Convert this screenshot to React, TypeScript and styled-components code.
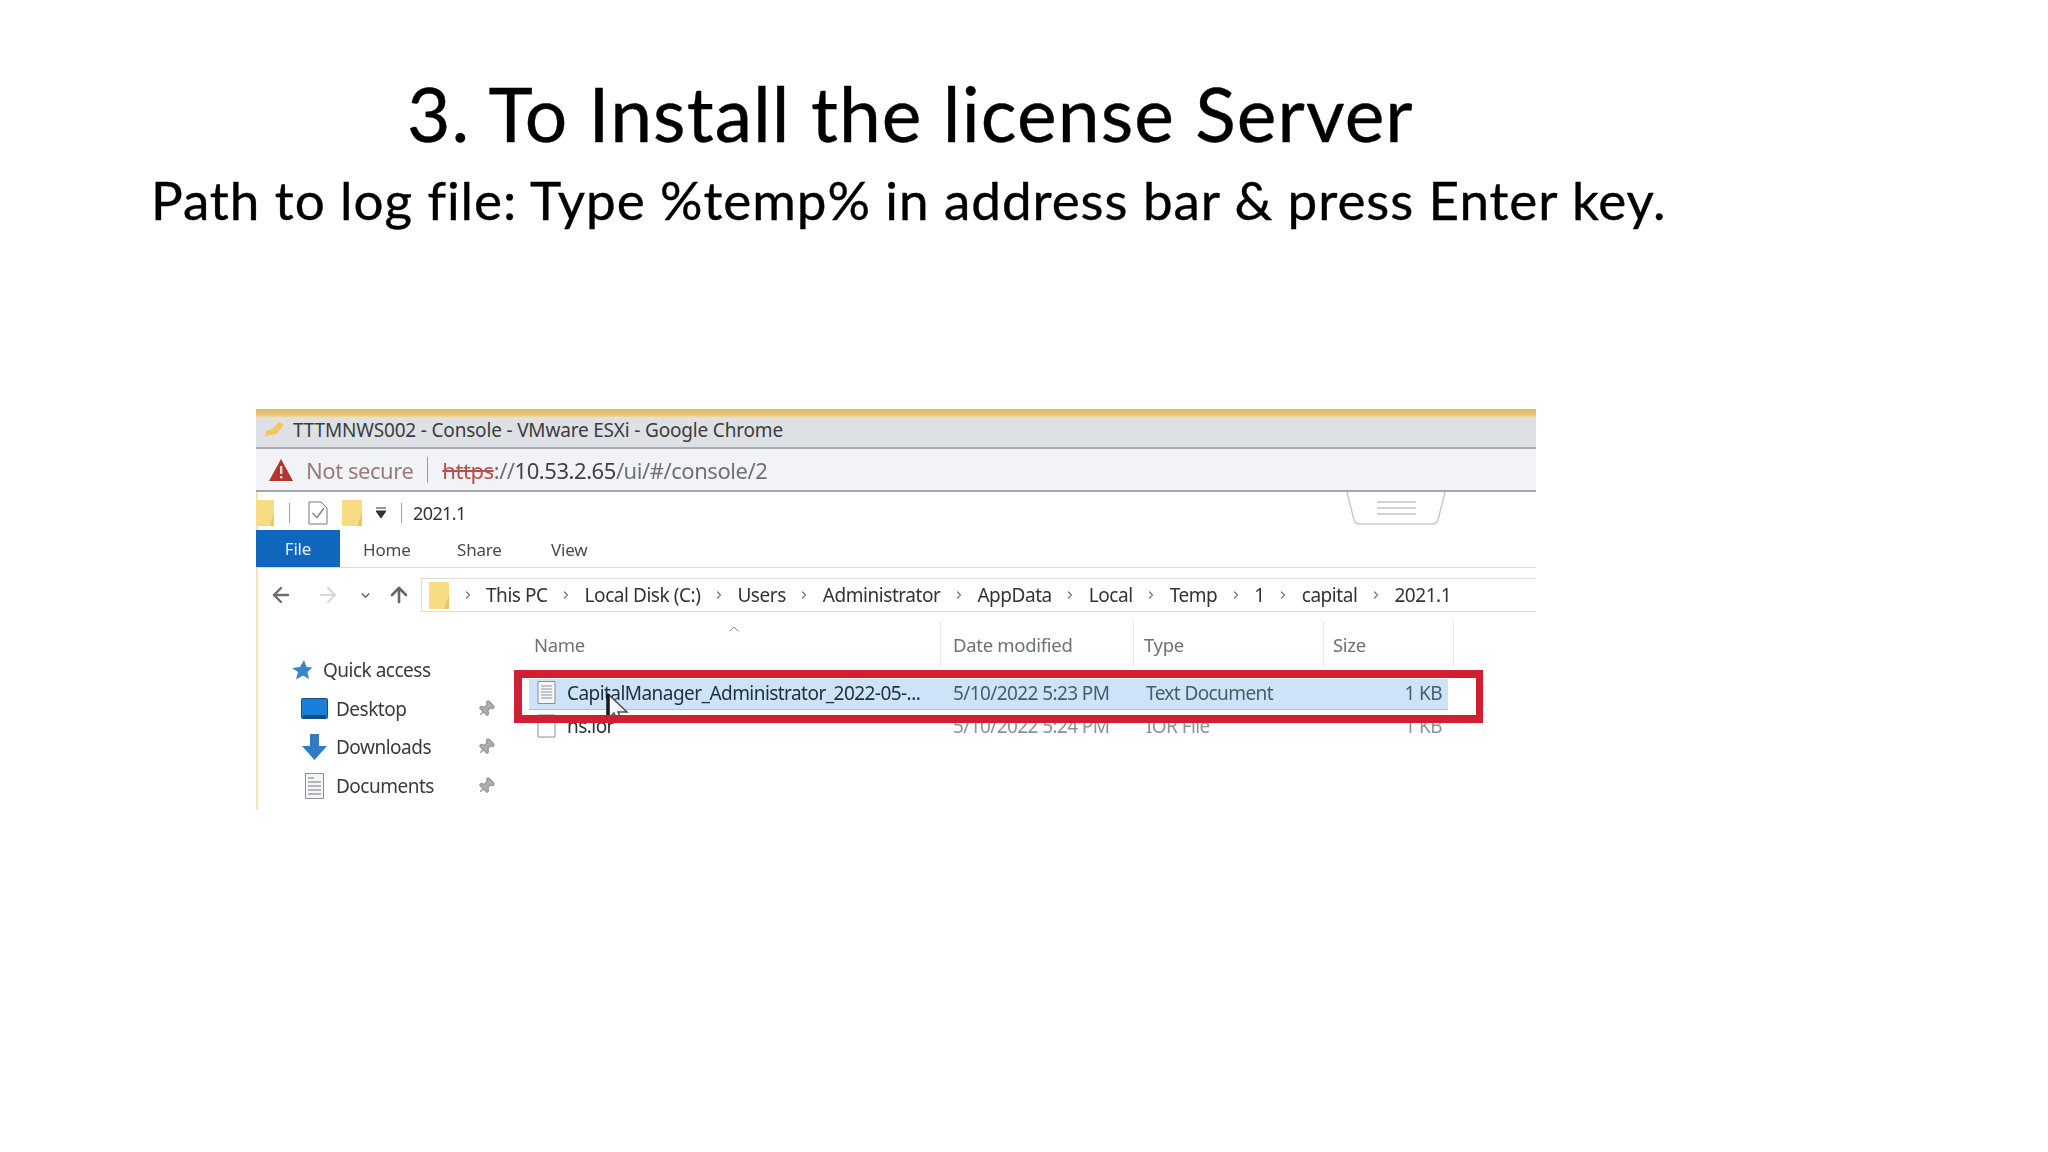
import React from 'react';
import styled, { createGlobalStyle } from 'styled-components';
import { ArrowLeft, ArrowRight, ArrowUp, ChevronDown, ChevronRight, ChevronUp, Pin } from 'lucide-react';

const GlobalStyle = createGlobalStyle`
  html, body {
    margin: 0;
    background: #ffffff;
  }
`;

const crumbs = ['This PC', 'Local Disk (C:)', 'Users', 'Administrator', 'AppData', 'Local', 'Temp', '1', 'capital', '2021.1'];

const FolderIcon = ({ w = 20, h = 26 }: { w?: number; h?: number }) => (
  <svg width={w} height={h} viewBox="0 0 20 26" preserveAspectRatio="none">
    <rect x="0" y="0" width="20" height="26" fill="#f8dc84" />
    <path d="M20 12 L15 26 H20 Z" fill="#e9c768" />
  </svg>
);

const DocIcon = () => (
  <svg width="19" height="23" viewBox="0 0 19 23">
    <path d="M1 .5 H18 V22.5 H1 Z" fill="#f4f6f8" stroke="#8a8f96" />
    <path d="M4 5 H15 M4 8 H15 M4 11 H15 M4 14 H15 M4 17 H15" stroke="#8f969e" />
  </svg>
);

const BlankFileIcon = () => (
  <svg width="19" height="24" viewBox="0 0 19 24">
    <path d="M1 1 H18 V23 H1 Z" fill="#fff" stroke="#8a8f96" />
  </svg>
);

const App: React.FC = () => (
  <>
    <GlobalStyle />
    <Slide>
      <Title>3. To Install the license Server</Title>
      <Subtitle>Path to log file: Type %temp% in address bar &amp; press Enter key.</Subtitle>
      <Shot>
        <TitleBar>
          <svg width="20" height="16" viewBox="0 0 20 16">
            <path d="M1 15 L2 9 L8 7 L15 0 L20 3 L12 12 L6 13 Z" fill="#f4c558" />
          </svg>
          <span>TTTMNWS002 - Console - VMware ESXi - Google Chrome</span>
        </TitleBar>
        <AddressBar>
          <svg width="26" height="24" viewBox="0 0 26 24">
            <path d="M13 1 L25 23 H1 Z" fill="#b3352f" />
            <rect x="12" y="8" width="2.4" height="8" fill="#f3d8d3" />
            <rect x="12" y="18" width="2.4" height="2.4" fill="#f3d8d3" />
          </svg>
          <NotSecure>Not secure</NotSecure>
          <UrlDivider />
          <Url>
            <s>https</s>
            <span>:</span>//<b>10.53.2.65</b>/ui/#/console/2
          </Url>
        </AddressBar>
        <QuickBar>
          <FolderIcon w={18} h={26} />
          <QuickDivider />
          <svg width="20" height="24" viewBox="0 0 20 24">
            <path d="M1 1 H13 L19 7 V23 H1 Z" fill="#fff" stroke="#777" />
            <path d="M4.5 12 L9 16.5 L16 7" fill="none" stroke="#888" strokeWidth="1.6" />
          </svg>
          <FolderIcon w={20} h={26} />
          <svg width="10" height="12" viewBox="0 0 10 12">
            <path d="M0 1 H10 M0 4 H10 L5 11 Z" fill="#333" stroke="#333" />
          </svg>
          <QuickDivider />
          <QuickPath>2021.1</QuickPath>
          <RibbonHandle width="100" height="34" viewBox="0 0 100 34">
            <path d="M1 0 L8 28 Q9 32 14 32 H86 Q91 32 92 28 L99 0" fill="#fff" stroke="#c9cbcd" strokeWidth="1.5" />
            <path d="M31 10 H70 M31 16 H70 M31 22 H70" stroke="#cfd1d3" strokeWidth="2" />
          </RibbonHandle>
        </QuickBar>
        <Tabs>
          <FileTab>File</FileTab>
          <Tab>Home</Tab>
          <Tab>Share</Tab>
          <Tab>View</Tab>
        </Tabs>
        <NavRow>
          <NavSlot $ml={13}>
            <ArrowLeft size={24} color="#6d6d6d" strokeWidth={2.4} />
          </NavSlot>
          <NavSlot $ml={23}>
            <ArrowRight size={24} color="#d8d8d8" strokeWidth={2.2} />
          </NavSlot>
          <NavSlot $ml={19}>
            <ChevronDown size={13} color="#777" strokeWidth={3} />
          </NavSlot>
          <NavSlot $ml={15}>
            <ArrowUp size={24} color="#666" strokeWidth={2.6} />
          </NavSlot>
          <PathBox>
            <FolderIcon w={20} h={27} />
            {crumbs.map((c) => (
              <Crumb key={c}>
                <ChevronRight size={12} color="#777" strokeWidth={2.5} />
                <span>{c}</span>
              </Crumb>
            ))}
          </PathBox>
        </NavRow>
        <Body>
          <Sidebar>
            <NavItem $indent={36}>
              <svg width="24" height="22" viewBox="0 0 22 22">
                <path d="M13 1 L15.5 8 L21.5 8.5 L16.5 13 L18 20 L12 16.5 L5 20.5 L7 13 L1 9 L9 8 Z" fill="#3a85c8" />
              </svg>
              <NavLabel $gap={9}>Quick access</NavLabel>
            </NavItem>
            <NavItem $indent={47}>
              <svg width="27" height="22" viewBox="0 0 27 22">
                <rect x="0.5" y="0.5" width="26" height="20" rx="1" fill="#1a7fd8" stroke="#17507f" />
                <rect x="2" y="17" width="23" height="3" fill="#134d80" />
              </svg>
              <NavLabel $gap={8}>Desktop</NavLabel>
              <PinMark />
            </NavItem>
            <NavItem $indent={47}>
              <svg width="27" height="26" viewBox="0 0 27 26">
                <path d="M9 0 H18 V12 H26 L13.5 26 L1 12 H9 Z" fill="#2f7cc4" />
              </svg>
              <NavLabel $gap={8}>Downloads</NavLabel>
              <PinMark />
            </NavItem>
            <NavItem $indent={51}>
              <svg width="19" height="26" viewBox="0 0 19 26">
                <path d="M0.5 0.5 H18.5 V25.5 H0.5 Z" fill="#f3f5f7" stroke="#8a8f96" />
                <path d="M3 5 H9 M3 9 H16 M3 13 H16 M3 17 H16 M3 21 H16" stroke="#6f7780" />
              </svg>
              <NavLabel $gap={12}>Documents</NavLabel>
              <PinMark />
            </NavItem>
          </Sidebar>
          <FileList>
            <SortMark>
              <ChevronUp size={16} color="#8a8a8a" strokeWidth={1.5} />
            </SortMark>
            <HeaderRow>
              <HeaderCell $pad={21}>Name</HeaderCell>
              <HeaderCell $pad={12}>Date modified</HeaderCell>
              <HeaderCell $pad={10}>Type</HeaderCell>
              <HeaderCell $pad={9}>Size</HeaderCell>
            </HeaderRow>
            <FileRow $selected>
              <NameCell>
                <DocIcon />
                <span>CapitalManager_Administrator_2022-05-...</span>
              </NameCell>
              <MetaCell>5/10/2022 5:23 PM</MetaCell>
              <MetaCell>Text Document</MetaCell>
              <SizeCell>1 KB</SizeCell>
            </FileRow>
            <FileRow>
              <NameCell>
                <BlankFileIcon />
                <span>ns.ior</span>
              </NameCell>
              <MetaCell>5/10/2022 5:24 PM</MetaCell>
              <MetaCell>IOR File</MetaCell>
              <SizeCell>1 KB</SizeCell>
            </FileRow>
            <Cursor width="24" height="30" viewBox="0 0 24 30">
              <path d="M2 1 V26 L8 20 L12 29 L16 27 L12 19 L21 19 Z" fill="#f4f6f8" stroke="#4a4f55" strokeWidth="1.5" />
              <path d="M2 1 V26" stroke="#15181c" strokeWidth="3.5" />
            </Cursor>
            <RedBox />
          </FileList>
        </Body>
      </Shot>
    </Slide>
  </>
);

export default App;

const Slide = styled.div`
  width: 2048px;
  height: 1152px;
  box-sizing: border-box;
  background: #ffffff;
  overflow: hidden;
  padding-top: 68px;
  font-family: 'Lato', 'Open Sans', sans-serif;
  font-variant-ligatures: none;
  color: #000000;
  -webkit-text-stroke: 0.4px #000000;
`;

const Title = styled.h1`
  margin: 0 0 0 407px;
  font-size: 75px;
  font-weight: 400;
  line-height: 90px;
  letter-spacing: 1.1px;
  white-space: nowrap;
`;

const Subtitle = styled.h2`
  margin: 10px 0 0 151px;
  font-size: 53px;
  font-weight: 400;
  line-height: 64px;
  letter-spacing: 0.94px;
  white-space: nowrap;
`;

const Shot = styled.div`
  width: 1280px;
  height: 401px;
  margin: 177px 0 0 256px;
  box-sizing: border-box;
  box-shadow: inset 2px 0 0 #f3e6b4;
  overflow: hidden;
  font-family: 'Noto Sans', 'Open Sans', sans-serif;
  color: #3c3c3c;
  -webkit-text-stroke: 0;
  filter: blur(0.7px);
`;

const TitleBar = styled.div`
  height: 40px;
  box-sizing: border-box;
  padding: 4px 0 0 8px;
  border-bottom: 2px solid #a9acb0;
  background: linear-gradient(#dfb45f 0, #e8c77f 6px, #ece2c8 9px, #dde1e6 11px, #dde1e6 100%);
  display: flex;
  align-items: center;
  gap: 9px;
  font-size: 19px;
  letter-spacing: -0.18px;
  white-space: nowrap;
`;

const AddressBar = styled.div`
  height: 43px;
  box-sizing: border-box;
  background: #f1f3f6;
  border-bottom: 2px solid #a4a6a8;
  display: flex;
  align-items: center;
  padding-left: 12px;
  font-size: 22px;
  letter-spacing: -0.45px;
  white-space: nowrap;
`;

const NotSecure = styled.span`
  margin-left: 12px;
  color: #9a7b76;
`;

const UrlDivider = styled.span`
  width: 1px;
  height: 26px;
  margin: 0 14px;
  background: #9a9a9a;
`;

const Url = styled.span`
  color: #6d7278;

  s {
    color: #b3534a;
  }

  b {
    font-weight: 400;
    color: #3f4347;
  }
`;

const QuickBar = styled.div`
  position: relative;
  height: 38px;
  display: flex;
  align-items: center;
  gap: 14px;
  padding-top: 3px;
  box-sizing: border-box;
  font-size: 18px;
  letter-spacing: -0.6px;
`;

const QuickDivider = styled.span`
  width: 1px;
  height: 20px;
  margin: 0 4px 0 1px;
  background: #a0a0a0;
`;

const QuickPath = styled.span`
  margin-left: -7px;
  color: #333333;
`;

const RibbonHandle = styled.svg`
  position: absolute;
  top: 0;
  left: 1090px;
`;

const Tabs = styled.div`
  height: 38px;
  box-sizing: border-box;
  padding-top: 1px;
  border-bottom: 1px solid #d9d9d9;
  display: flex;
  font-size: 17px;
  letter-spacing: -0.2px;
`;

const FileTab = styled.div`
  width: 84px;
  margin-top: -1px;
  background: #0f67bd;
  color: #e6f0fa;
  display: flex;
  align-items: center;
  justify-content: center;
`;

const Tab = styled.div`
  display: flex;
  align-items: center;
  margin-left: 23px;
  width: 71px;
  color: #4a4a4a;
`;

const NavRow = styled.div`
  height: 52px;
  box-sizing: border-box;
  display: flex;
  align-items: center;
  padding: 10px 0 8px 0;
`;

const NavSlot = styled.span<{ $ml: number }>`
  display: flex;
  margin-left: ${(p) => p.$ml}px;
`;

const PathBox = styled.div`
  flex: 1;
  height: 34px;
  margin-left: 10px;
  box-sizing: border-box;
  border: 1px solid #dedede;
  border-right: none;
  display: flex;
  align-items: center;
  padding-left: 7px;
  font-size: 19px;
  letter-spacing: -0.45px;
  color: #333333;
  white-space: nowrap;
`;

const Crumb = styled.span`
  display: flex;
  align-items: center;
  gap: 12.5px;
  margin-left: 12.5px;
`;

const Body = styled.div`
  display: flex;
  height: 190px;
`;

const Sidebar = styled.div`
  width: 257px;
  flex: none;
  padding-top: 31px;
  display: flex;
  flex-direction: column;
`;

const NavItem = styled.div<{ $indent: number }>`
  height: 38.5px;
  display: flex;
  align-items: center;
  padding-left: ${(p) => p.$indent - 2}px;
  position: relative;
`;

const NavLabel = styled.span<{ $gap: number }>`
  margin-left: ${(p) => p.$gap}px;
  font-size: 19px;
  letter-spacing: -0.5px;
  color: #3a3a3a;
`;

const PinMark = styled(Pin).attrs({ size: 18, color: '#9a9a9a', fill: '#b0b0b0' })`
  position: absolute;
  left: 221px;
  top: 10px;
  transform: rotate(45deg);
`;

const FileList = styled.div`
  position: relative;
  flex: 1;
`;

const SortMark = styled.div`
  position: absolute;
  left: 213px;
  top: 1px;
  line-height: 0;
`;

const HeaderRow = styled.div`
  height: 46px;
  padding-top: 2px;
  box-sizing: border-box;
  display: grid;
  grid-template-columns: 428px 193px 190px 130px;
`;

const HeaderCell = styled.div<{ $pad: number }>`
  border-right: 1px solid #e6e6e6;
  padding-left: ${(p) => p.$pad}px;
  display: flex;
  align-items: center;
  font-size: 18.5px;
  letter-spacing: -0.3px;
  color: #6b7278;
`;

const FileRow = styled.div<{ $selected?: boolean }>`
  height: 31px;
  box-sizing: border-box;
  display: grid;
  grid-template-columns: 412px 193px 190px 118px;
  align-items: center;
  width: 919px;
  margin: ${(p) => (p.$selected ? '13px 0 1px 16px' : '0 0 0 16px')};
  padding-bottom: ${(p) => (p.$selected ? '3px' : '0')};
  background: ${(p) => (p.$selected ? '#cde4f8' : 'transparent')};
  border-bottom: 1px solid ${(p) => (p.$selected ? '#a9c4d8' : 'transparent')};
  font-size: 19px;
  letter-spacing: -0.6px;
  color: ${(p) => (p.$selected ? '#4a5c6c' : '#8d9297')};
  white-space: nowrap;
`;

const NameCell = styled.div`
  display: flex;
  align-items: center;
  gap: 11px;
  padding-left: 8px;
  color: #24303c;
  letter-spacing: -0.55px;
`;

const MetaCell = styled.div`
  padding-left: 12px;
`;

const SizeCell = styled.div`
  text-align: right;
`;

const RedBox = styled.div`
  position: absolute;
  left: 1px;
  top: 50px;
  width: 969px;
  height: 53px;
  box-sizing: border-box;
  border: solid #cf1f30;
  border-width: 8px 7px 8px 8px;
`;

const Cursor = styled.svg`
  position: absolute;
  left: 93px;
  top: 73px;
`;
